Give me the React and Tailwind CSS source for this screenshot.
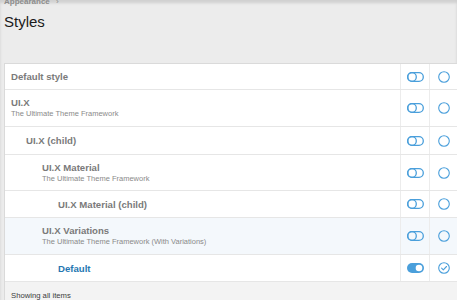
import React from "react";

const BLUE = "#4a9fdb";

function ToggleOff() {
  return (
    <svg width="17" height="10" viewBox="0 0 17 10">
      <rect x="0.7" y="0.7" width="15.6" height="8.6" rx="4.3" fill="none" stroke={BLUE} strokeWidth="1.3" />
      <circle cx="5" cy="5" r="4.3" fill="none" stroke={BLUE} strokeWidth="1.3" />
    </svg>
  );
}

function ToggleOn() {
  return (
    <svg width="17" height="10" viewBox="0 0 17 10">
      <rect x="0" y="0" width="17" height="10" rx="5" fill={BLUE} />
      <circle cx="12" cy="5" r="3.3" fill="#fff" />
    </svg>
  );
}

function Radio({ checked }) {
  return (
    <svg width="12" height="12" viewBox="0 0 12 12">
      <circle cx="6" cy="6" r="5.3" fill="none" stroke={BLUE} strokeWidth="1.1" />
      {checked && (
        <path d="M3.6 6.2 L5.3 7.8 L8.5 4.5" fill="none" stroke={BLUE} strokeWidth="1.1" strokeLinecap="round" strokeLinejoin="round" />
      )}
    </svg>
  );
}

const PADS = ["pl-[6px]", "pl-[21px]", "pl-[37px]", "pl-[53px]"];

function Row({ h, indent, title, sub, on, highlight, blue }) {
  return (
    <div className={`flex border-b border-[#e6e6e6] ${h} ${highlight ? "bg-[#f4f8fc]" : "bg-white"}`}>
      <div className={`flex-1 flex flex-col justify-center ${PADS[indent]}`}>
        <div className={`text-[9.6px] leading-[11px] font-bold ${blue ? "text-[#2577b1]" : "text-[#7a7a7a]"}`}>{title}</div>
        {sub && <div className="text-[7.5px] leading-[10px] text-[#8a8a8a] mt-[1px]">{sub}</div>}
      </div>
      <div className="w-[29px] border-l border-[#ececec] flex items-center justify-center">
        {on ? <ToggleOn /> : <ToggleOff />}
      </div>
      <div className="w-[28px] border-l border-[#ececec] flex items-center justify-center">
        <Radio checked={on} />
      </div>
    </div>
  );
}

export default function App() {
  return (
    <div className="w-[457px] h-[300px] overflow-hidden bg-[#ececec] font-['Liberation_Sans',Arial,sans-serif] shadow-[inset_0_3px_3px_rgba(0,0,0,0.12)]">
      <div className="px-[4px]">
        <div className="mt-[-3px] h-[10px] text-[8px] leading-[10px] font-bold text-[#8c8c8c]">
          Appearance <span className="ml-[4px] font-normal">›</span>
        </div>
        <div className="mt-[6px] text-[15px] leading-[18px] text-[#1a1a1a]">Styles</div>
      </div>
      <div className="mt-[32px] ml-[4px] border-l border-t border-[#dadada] bg-white">
        <Row h="h-[26px]" indent={0} title="Default style" />
        <Row h="h-[37px]" indent={0} title="UI.X" sub="The Ultimate Theme Framework" />
        <Row h="h-[28px]" indent={1} title="UI.X (child)" />
        <Row h="h-[36px]" indent={2} title="UI.X Material" sub="The Ultimate Theme Framework" />
        <Row h="h-[27px]" indent={3} title="UI.X Material (child)" />
        <Row h="h-[37px]" indent={2} title="UI.X Variations" sub="The Ultimate Theme Framework (With Variations)" highlight />
        <Row h="h-[27px]" indent={3} title="Default" on blue />
        <div className="h-[30px] bg-[#f3f3f3] pl-[6px] pt-[9px] text-[7.7px] leading-[10px] text-[#3c3c3c]">
          Showing all items
        </div>
      </div>
    </div>
  );
}
